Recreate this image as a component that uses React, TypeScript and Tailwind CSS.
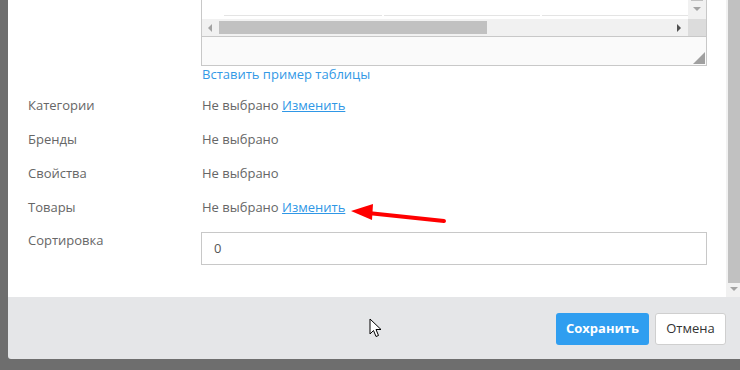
export default function App() {
  const rows = [
    { label: "Категории", link: true },
    { label: "Бренды", link: false },
    { label: "Свойства", link: false },
    { label: "Товары", link: true },
  ];

  return (
    <div
      className="relative flex h-[370px] w-[740px] overflow-hidden bg-[#6e6e6e] text-[13px] text-[#666]"
      style={{ fontFamily: '"Open Sans", "Noto Sans", sans-serif' }}
    >
      <div className="w-2 shrink-0" />
      <div className="flex h-[359px] flex-1 flex-col overflow-hidden rounded-bl-[3px]">
        {/* body */}
        <div className="flex h-[297px] shrink-0 bg-white">
          <div className="flex flex-1 flex-col pl-[20px]">
            {/* textarea / table widget */}
            <div className="ml-[173px] flex h-[66px] w-[506px] flex-col border-x border-b border-[#c8c8c8]">
              <div className="flex h-[19px]">
                <div className="relative flex-1 bg-white">
                  <div className="absolute left-[22px] right-0 top-[15px] flex gap-[2px]">
                    <div className="h-px w-[158px] bg-[#e4e4e4]" />
                    <div className="h-px w-[156px] bg-[#e4e4e4]" />
                    <div className="h-px flex-1 bg-[#e4e4e4]" />
                  </div>
                </div>
                <div className="flex w-[18px] flex-col items-center bg-[#f1f1f1]">
                  <div className="h-px w-[12px] bg-[#c1c1c1]" />
                  <svg width="8" height="5" className="mt-[6px]" viewBox="0 0 8 5">
                    <polygon points="0,0 8,0 4,4" fill="#a3a3a3" />
                  </svg>
                </div>
              </div>
              <div className="flex h-[17px]">
                <div className="flex flex-1 items-center bg-[#f1f1f1]">
                  <svg width="5" height="8" className="ml-[6px]" viewBox="0 0 5 8">
                    <polygon points="4,0 4,8 0,4" fill="#a3a3a3" />
                  </svg>
                  <div className="ml-[6px] h-[13px] w-[268px] bg-[#c1c1c1]" />
                  <div className="flex-1" />
                  <svg width="5" height="8" className="mr-[6px]" viewBox="0 0 5 8">
                    <polygon points="0,0 0,8 4,4" fill="#505050" />
                  </svg>
                </div>
                <div className="w-[18px] bg-[#dcdcdc]" />
              </div>
              <div className="flex flex-1 items-end justify-end border-t border-[#c8c8c8] bg-[#fafafa] p-[1px]">
                <svg width="12" height="12" viewBox="0 0 12 12">
                  <polygon points="12,0 12,12 0,12" fill="#a0a0a0" />
                </svg>
              </div>
            </div>
            <div className="ml-[174px] h-[16px] leading-[16px] text-[#3399e6]">Вставить пример таблицы</div>

            <div className="mt-[7px] flex flex-col">
              {rows.map((r) => (
                <div key={r.label} className="flex h-[34px] items-center">
                  <div className="w-[174px]">{r.label}</div>
                  <div>
                    Не выбрано{" "}
                    {r.link && <span className="text-[#2f97e6] underline">Изменить</span>}
                  </div>
                </div>
              ))}
            </div>

            <div className="mt-[7px] flex">
              <div className="w-[173px] leading-[16px]">Сортировка</div>
              <div className="flex h-[33px] w-[506px] items-center border border-[#c8c8c8] px-[12px] text-[#555]">0</div>
            </div>
          </div>
          {/* page scrollbar */}
          <div className="flex w-[14px] flex-col items-end bg-[#f1f1f1]">
            <div className="h-[283px] w-[12px] bg-[#c1c1c1]" />
            <svg width="8" height="5" className="mr-[2px] mt-[4px]" viewBox="0 0 8 5">
              <polygon points="0,0 8,0 4,4" fill="#a3a3a3" />
            </svg>
          </div>
        </div>

        {/* footer */}
        <div className="flex flex-1 items-start justify-end gap-[6px] bg-[#e5e6e8] pr-[14px] pt-[16px]">
          <button className="h-[32px] w-[93px] rounded-[3px] bg-[#2f9ef0] text-[13px] font-bold text-white">
            Сохранить
          </button>
          <button className="h-[32px] w-[71px] rounded-[3px] border border-[#cfcfcf] bg-white text-[13px] text-[#333]">
            Отмена
          </button>
        </div>
      </div>

      {/* red annotation arrow */}
      <svg className="absolute left-[345px] top-[200px]" width="105" height="28" viewBox="345 200 105 28">
        <line x1="444" y1="221" x2="368" y2="213" stroke="#f00" strokeWidth="4" strokeLinecap="round" />
        <polygon points="351,211 373,204 372,220" fill="#f00" />
      </svg>

      {/* mouse cursor */}
      <svg className="absolute left-[369px] top-[318px]" width="14" height="21" viewBox="0 0 14 21">
        <path d="M1 1 L1 16 L4.5 12.5 L7 18.5 L9.5 17.5 L7 11.5 L12 11.5 Z" fill="#fff" stroke="#000" strokeWidth="1" strokeLinejoin="round" />
      </svg>
    </div>
  );
}
